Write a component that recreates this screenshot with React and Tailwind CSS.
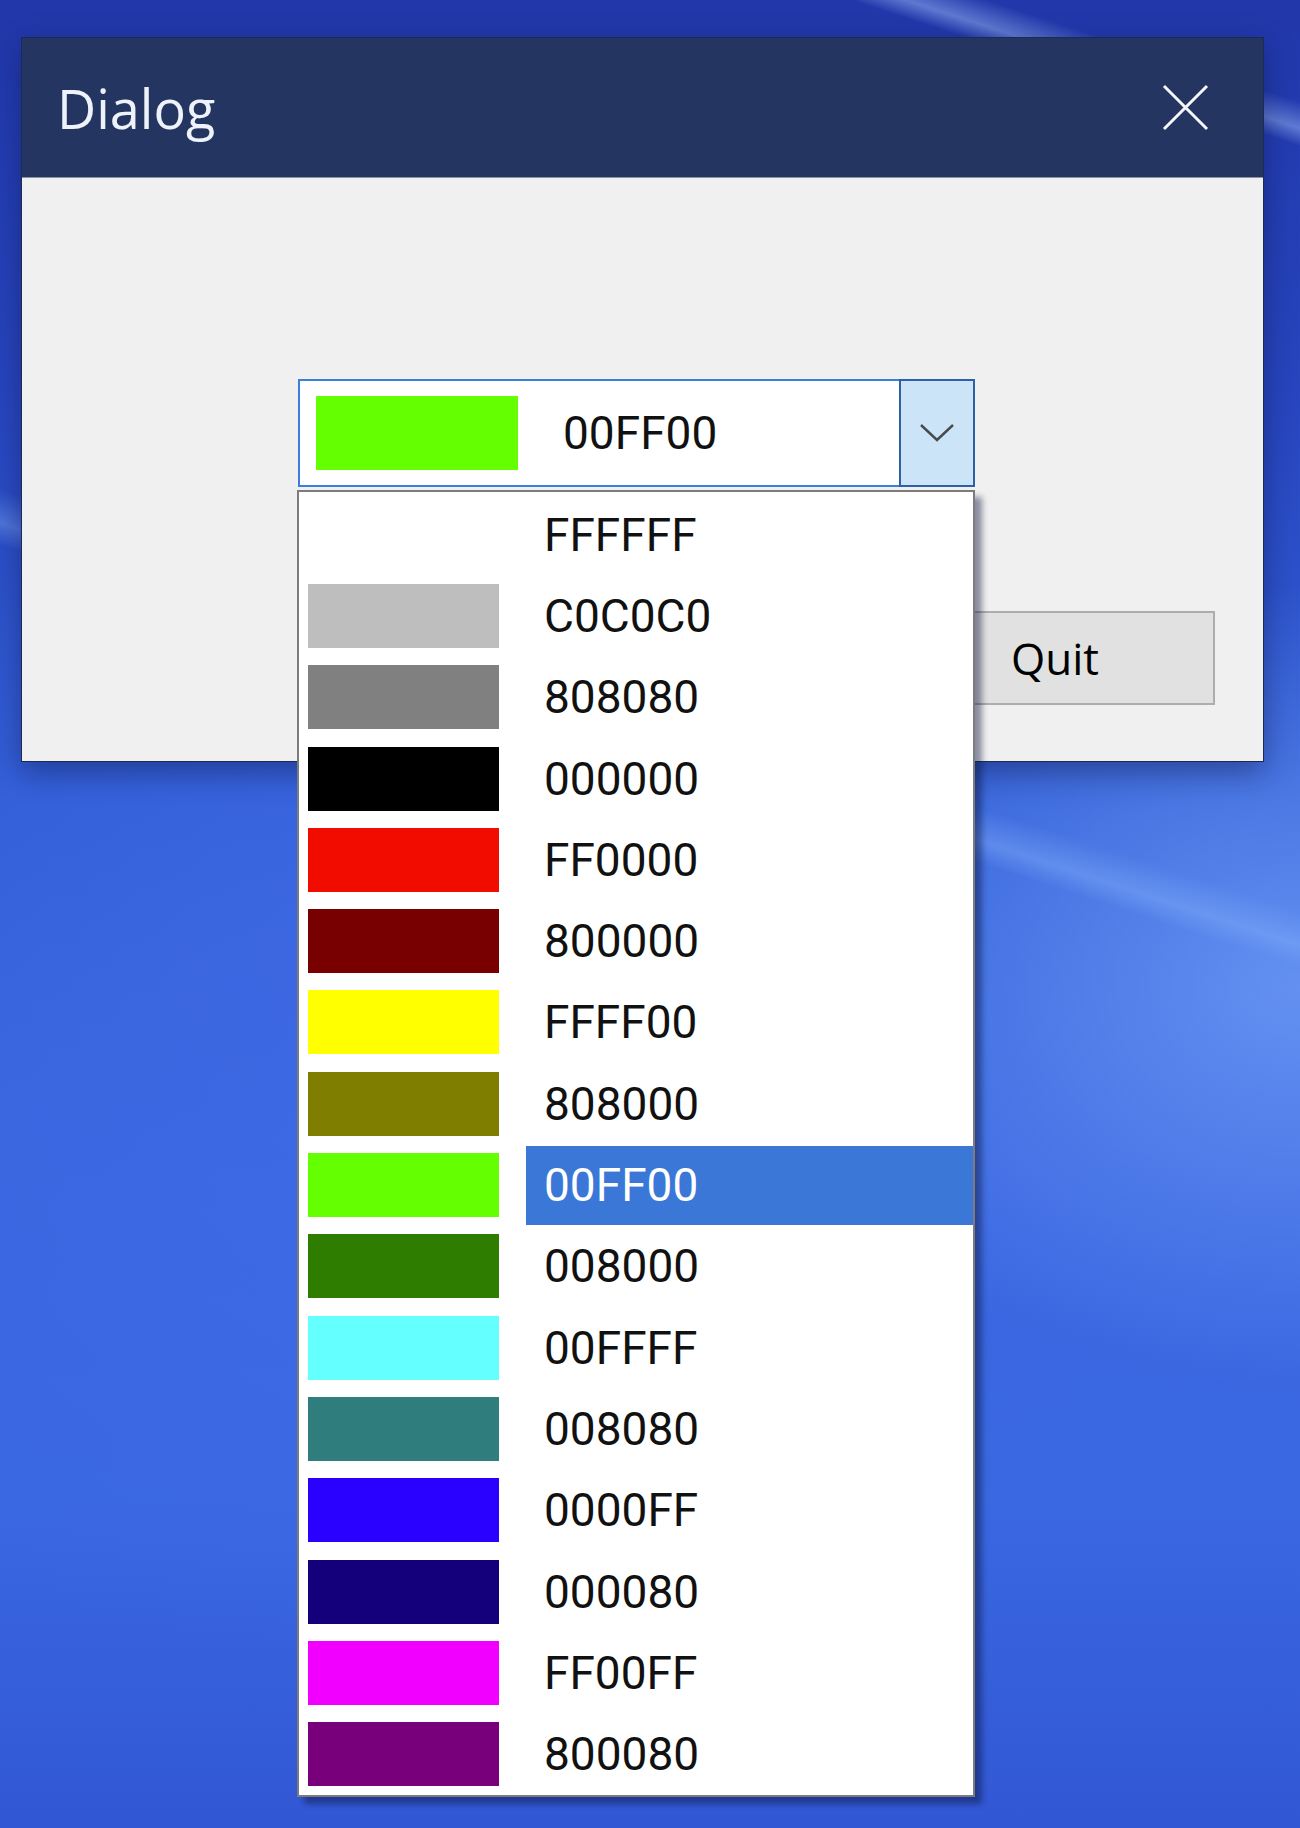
import React from 'react';

const colors = [
  { hex: 'FFFFFF', swatch: '#ffffff' },
  { hex: 'C0C0C0', swatch: '#bebebe' },
  { hex: '808080', swatch: '#808080' },
  { hex: '000000', swatch: '#000000' },
  { hex: 'FF0000', swatch: '#f20c00' },
  { hex: '800000', swatch: '#780000' },
  { hex: 'FFFF00', swatch: '#ffff00' },
  { hex: '808000', swatch: '#807e00' },
  { hex: '00FF00', swatch: '#64ff00' },
  { hex: '008000', swatch: '#2f7d00' },
  { hex: '00FFFF', swatch: '#64ffff' },
  { hex: '008080', swatch: '#307d7d' },
  { hex: '0000FF', swatch: '#2a00ff' },
  { hex: '000080', swatch: '#14007a' },
  { hex: 'FF00FF', swatch: '#f200ff' },
  { hex: '800080', swatch: '#78007a' },
];

function ColorList({ selected }) {
  return (
    <div className="absolute left-[-1px] top-full z-10 mt-[3px] w-[678px] border-2 border-[#7c7c7c] bg-white pt-[2px] shadow-[7px_7px_6px_rgba(10,20,60,0.45)]">
      {colors.map((c) => {
        const isSel = c.hex === selected;
        return (
          <div key={c.hex} className="flex h-[81.3px] items-center pl-[9px]">
            <div className="h-[64px] w-[191px] shrink-0" style={{ backgroundColor: c.swatch }} />
            <div
              className={`ml-[27px] flex h-[79px] flex-1 items-center pl-[18px] text-[46px] leading-none ${
                isSel ? 'bg-[#3a77d7] text-white' : 'text-[#111]'
              }`}
            >
              {c.hex}
            </div>
          </div>
        );
      })}
    </div>
  );
}

function ColorCombo() {
  const [value] = React.useState('00FF00');

  return (
    <div className="relative ml-[276px] mt-[201px] flex h-[108px] w-[677px] font-['Roboto',sans-serif]">
      <div className="flex flex-1 items-center border-2 border-r-0 border-[#3d7fd8] bg-white pl-[16px]">
        <div className="h-[74px] w-[202px] bg-[#64ff00]" />
        <span className="ml-[45px] text-[46px] leading-none text-[#111]">{value}</span>
      </div>
      <div className="flex w-[76px] items-center justify-center border-2 border-[#2d60a8] bg-[#cce4f7]">
        <svg width="36" height="20" viewBox="0 0 36 20" fill="none">
          <path d="M2 2 L18 17 L34 2" stroke="#4a4a4a" strokeWidth="2.4" />
        </svg>
      </div>
      <ColorList selected={value} />
    </div>
  );
}

export default function App() {
  return (
    <div className="h-[1828px] w-[1300px] overflow-hidden bg-[#2f55d0] bg-[radial-gradient(ellipse_40%_22%_at_100%_54%,rgba(130,175,255,0.6),transparent),linear-gradient(18deg,transparent_57%,rgba(150,190,255,0.35)_58%,transparent_59.5%),linear-gradient(18deg,transparent_93.5%,rgba(170,200,255,0.45)_94.3%,transparent_95.5%),radial-gradient(ellipse_55%_35%_at_35%_58%,rgba(70,110,235,0.55),transparent),linear-gradient(180deg,#2137aa_0%,#2846bf_22%,#3260d8_45%,#3966e0_65%,#3a68e2_82%,#3257d4_100%)] pl-[21px] pt-[37px] font-['Open_Sans',sans-serif]">
      <div className="flex w-[1243px] flex-col border border-[#1d2b52] shadow-[0_10px_28px_rgba(10,20,70,0.45)]">
        <div className="flex h-[139px] items-center justify-between bg-[#243561] pl-[35px] pr-[54px]">
          <span className="text-[54px] leading-none text-[#eef3fb]">Dialog</span>
          <svg width="47" height="47" viewBox="0 0 47 47">
            <path d="M2 2 L45 45 M45 2 L2 45" stroke="#f4f6fa" strokeWidth="3" />
          </svg>
        </div>
        <div className="flex h-[584px] flex-col border-t border-[#8a93a8] bg-[#f0f0f0]">
          <ColorCombo />
          <button className="ml-[873px] mt-[124px] flex h-[94px] w-[320px] items-center justify-center border-2 border-[#adadad] bg-[#e1e1e1] text-[44px] leading-none text-black">
            Quit
          </button>
        </div>
      </div>
    </div>
  );
}
